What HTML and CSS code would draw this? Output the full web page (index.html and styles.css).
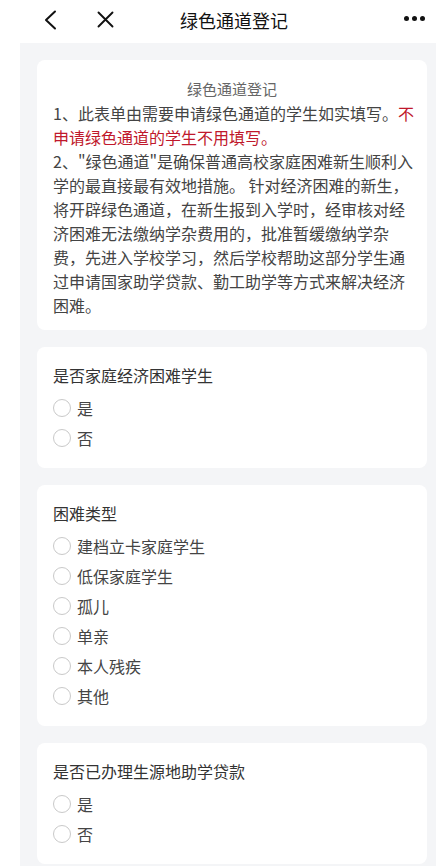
FILE: index.html
```html
<!DOCTYPE html>
<html lang="zh-CN">
<head>
<meta charset="utf-8">
<title>绿色通道登记</title>
<link rel="stylesheet" href="styles.css">
</head>
<body>
<header class="topbar">
  <span class="icon back" aria-label="返回">
    <svg width="14" height="20" viewBox="0 0 14 20"><path d="M12 1.5 L3 10 L12 18.5" fill="none" stroke="#111" stroke-width="2" stroke-linecap="round" stroke-linejoin="round"/></svg>
  </span>
  <span class="icon close" aria-label="关闭">
    <svg width="17" height="17" viewBox="0 0 17 17"><path d="M1.5 1.5 L15.5 15.5 M15.5 1.5 L1.5 15.5" fill="none" stroke="#111" stroke-width="1.9" stroke-linecap="round"/></svg>
  </span>
  <h1 class="title">绿色通道登记</h1>
  <span class="more" aria-label="更多"><i></i><i></i><i></i></span>
</header>
<main class="panel">
  <section class="card intro">
    <h2 class="intro-title">绿色通道登记</h2>
    <p>1、此表单由需要申请绿色通道的学生如实填写。<span class="warn">不申请绿色通道的学生不用填写。</span></p>
    <p>2、"绿色通道"是确保普通高校家庭困难新生顺利入学的最直接最有效地措施。 针对经济困难的新生，将开辟绿色通道，在新生报到入学时，经审核对经济困难无法缴纳学杂费用的，批准暂缓缴纳学杂费，先进入学校学习，然后学校帮助这部分学生通过申请国家助学贷款、勤工助学等方式来解决经济困难。</p>
  </section>
  <section class="card question">
    <h3 class="q-title">是否家庭经济困难学生</h3>
    <ul class="options">
      <li><span class="radio"></span>是</li>
      <li><span class="radio"></span>否</li>
    </ul>
  </section>
  <section class="card question">
    <h3 class="q-title">困难类型</h3>
    <ul class="options">
      <li><span class="radio"></span>建档立卡家庭学生</li>
      <li><span class="radio"></span>低保家庭学生</li>
      <li><span class="radio"></span>孤儿</li>
      <li><span class="radio"></span>单亲</li>
      <li><span class="radio"></span>本人残疾</li>
      <li><span class="radio"></span>其他</li>
    </ul>
  </section>
  <section class="card question">
    <h3 class="q-title">是否已办理生源地助学贷款</h3>
    <ul class="options">
      <li><span class="radio"></span>是</li>
      <li><span class="radio"></span>否</li>
    </ul>
  </section>
</main>
</body>
</html>
```
FILE: styles.css
```css
* { box-sizing: border-box; }
html, body {
  margin: 0;
  padding: 0;
  background: #ffffff;
  font-family: "Noto Sans CJK SC", "Noto Sans", sans-serif;
  color: #333333;
}
body { overflow: hidden; height: 866px; }

.topbar {
  height: 43px;
  display: flex;
  align-items: center;
  padding-left: 43px;
  padding-right: 11px;
}
.icon { display: flex; align-items: center; }
.back { margin-top: -3px; }
.close { margin-left: 40px; margin-top: -4px; }
.title {
  margin: -4px 0 0 66px;
  font-size: 18px;
  font-weight: 400;
  color: #111111;
  line-height: 24px;
}
.more {
  margin-left: auto;
  display: flex;
  gap: 3px;
  margin-top: -6px;
}
.more i {
  display: block;
  width: 5px;
  height: 5px;
  border-radius: 50%;
  background: #111;
}

.panel {
  margin-left: 20px;
  background: #f4f5f7;
  padding: 17px 9px 20px 17px;
  display: flex;
  flex-direction: column;
  gap: 17px;
  min-height: 823px;
}

.card {
  background: #ffffff;
  border-radius: 8px;
}

.intro {
  padding: 17px 12px 13px 16px;
}
.intro-title {
  margin: 0;
  text-align: center;
  font-size: 15px;
  font-weight: 400;
  line-height: 24px;
  color: #666666;
  padding-right: 4px;
}
.intro p {
  margin: 0;
  font-size: 16px;
  line-height: 24px;
  color: #444444;
}
.warn { color: #c0182c; }

.question {
  padding: 16px 16px 15px 16px;
}
.q-title {
  margin: 0 0 6px 0;
  font-size: 16px;
  font-weight: 400;
  line-height: 24px;
  color: #333333;
}
.options {
  list-style: none;
  margin: 0;
  padding: 0;
}
.options li {
  height: 30px;
  display: flex;
  align-items: center;
  gap: 6px;
  font-size: 16px;
  color: #444444;
}
.radio {
  width: 18px;
  height: 18px;
  border: 1px solid #c9c9c9;
  border-radius: 50%;
  flex: none;
}
```
